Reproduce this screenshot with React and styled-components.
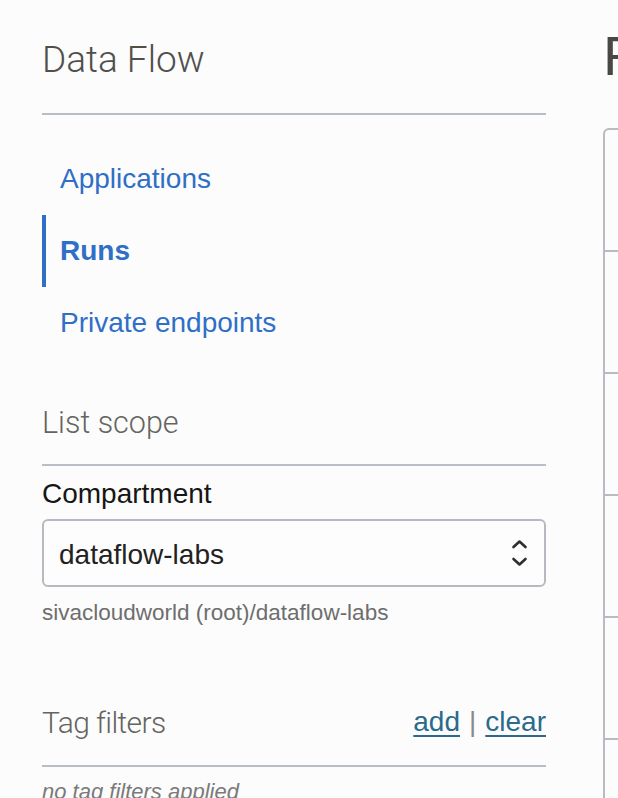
import React from 'react';
import styled, { createGlobalStyle } from 'styled-components';

const GlobalStyle = createGlobalStyle`
  html, body {
    margin: 0;
    padding: 0;
    background: #fcfcfc;
    overflow: hidden;
  }
  body {
    font-family: "Liberation Sans", Arial, sans-serif;
    color: #161616;
  }
`

const Page = styled.div`
  display: flex;
  gap: 57px;
  padding-left: 42px;
  width: 1400px;
  min-height: 798px;
`

const Sidebar = styled.aside`
  width: 504px;
  flex-shrink: 0;
`

const SectionHead = styled.div`
  display: flex;
  align-items: center;
  justify-content: space-between;
  box-sizing: border-box;
  height: ${p => p.$h}px;
  padding-top: ${p => p.$pt || 0}px;
  border-bottom: 2px solid #b9bec4;
`

const LightTitle = styled.h2`
  margin: 0;
  font-family: Roboto, "Liberation Sans", sans-serif;
  font-weight: 300;
  font-size: ${p => p.$size}px;
  color: ${p => p.$color || '#514f4c'};
  letter-spacing: ${p => p.$ls || 0}px;
`

const NavList = styled.nav`
  margin-top: 28px;
  display: flex;
  flex-direction: column;
`

const NavItem = styled.a`
  display: flex;
  align-items: center;
  height: 72px;
  box-sizing: border-box;
  padding-left: 14px;
  border-left: 4px solid ${p => (p.$active ? '#2f6fc6' : 'transparent')};
  font-size: 28px;
  font-weight: ${p => (p.$active ? 700 : 400)};
  color: #2f6fc6;
  text-decoration: none;
  cursor: pointer;
`

const FieldLabel = styled.label`
  display: flex;
  align-items: center;
  height: 53px;
  padding-top: 3px;
  box-sizing: border-box;
  font-size: 28px;
  color: #161616;
`

const Select = styled.div`
  display: flex;
  align-items: center;
  justify-content: space-between;
  height: 68px;
  box-sizing: border-box;
  padding: 4px 16px 0 15px;
  border: 2px solid #b6bac0;
  border-radius: 6px;
  background: #fdfdfd;
  font-size: 28px;
  color: #222;

  svg {
    margin-top: -4px;
  }
`

const Helper = styled.div`
  display: flex;
  align-items: center;
  height: 52px;
  font-size: 22.5px;
  color: #6e6e6e;
`

const Links = styled.div`
  display: flex;
  align-items: center;
  gap: 9px;
  font-size: 28px;
  color: #8a8a8a;
`

const TextLink = styled.a`
  color: #2b6a8d;
  text-decoration: underline;
  text-underline-offset: 4px;
  text-decoration-thickness: 2px;
  cursor: pointer;
`

const EmptyNote = styled.div`
  display: flex;
  align-items: center;
  height: 50px;
  font-size: 22px;
  font-style: italic;
  color: #7a7a7a;
`

const Main = styled.main`
  flex: 1;
`

const PageHeading = styled.h1`
  margin: 28px 0 0;
  height: 56px;
  line-height: 56px;
  font-size: 56px;
  font-weight: 400;
  color: #4a4845;
`

const TableBox = styled.div`
  margin-top: 44px;
  border-left: 2px solid #b8bcc1;
  border-top: 2px solid #b8bcc1;
  border-top-left-radius: 6px;
`

const TableRow = styled.div`
  height: 120px;
  border-bottom: 2px solid #b8bcc1;
`

const SortIcon = () => (
  <svg width="17" height="28" viewBox="0 0 17 28" fill="none" stroke="#2e2e2e" strokeWidth="2.6" strokeLinecap="round" strokeLinejoin="round">
    <polyline points="2.5,8 8.5,2.5 14.5,8" />
    <polyline points="2.5,20 8.5,25.5 14.5,20" />
  </svg>
)

const navItems = ['Applications', 'Runs', 'Private endpoints']

export default function App() {
  return (
    <>
      <GlobalStyle />
      <Page>
        <Sidebar>
          <SectionHead $h={115} $pt={6}>
            <LightTitle $size={37}>Data Flow</LightTitle>
          </SectionHead>

          <NavList>
            {navItems.map(item => (
              <NavItem key={item} $active={item === 'Runs'}>{item}</NavItem>
            ))}
          </NavList>

          <SectionHead $h={107} $pt={21}>
            <LightTitle $size={30.5} $color="#66645f">List scope</LightTitle>
          </SectionHead>

          <FieldLabel>Compartment</FieldLabel>
          <Select>
            <span>dataflow-labs</span>
            <SortIcon />
          </Select>
          <Helper>sivacloudworld (root)/dataflow-labs</Helper>

          <SectionHead $h={128} $pt={40}>
            <LightTitle $size={30} $color="#66645f" $ls={-0.6}>Tag filters</LightTitle>
            <Links>
              <TextLink>add</TextLink>
              <span>|</span>
              <TextLink>clear</TextLink>
            </Links>
          </SectionHead>
          <EmptyNote>no tag filters applied</EmptyNote>
        </Sidebar>

        <Main>
          <PageHeading>Runs</PageHeading>
          <TableBox>
            {[0, 1, 2, 3, 4, 5].map(i => (
              <TableRow key={i} />
            ))}
          </TableBox>
        </Main>
      </Page>
    </>
  );
}
